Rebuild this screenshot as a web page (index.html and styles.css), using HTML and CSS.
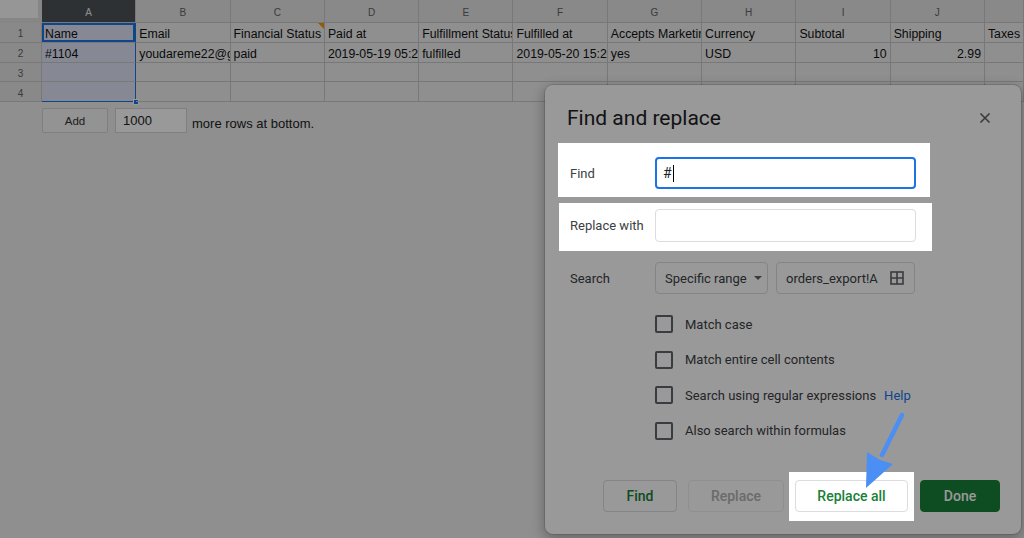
FILE: index.html
```html
<!DOCTYPE html>
<html>
<head>
<meta charset="utf-8">
<link rel="stylesheet" href="styles.css">
</head>
<body>
<div class="sheet">
  <div class="corner"></div>
  <div class="ch selh">A</div><div class="ch">B</div><div class="ch">C</div><div class="ch">D</div><div class="ch">E</div><div class="ch">F</div><div class="ch">G</div><div class="ch">H</div><div class="ch">I</div><div class="ch">J</div><div class="ch"></div>

  <div class="rh">1</div>
  <div class="c a active">Name</div><div class="c">Email</div><div class="c note">Financial Status</div><div class="c">Paid at</div><div class="c">Fulfillment Status</div><div class="c">Fulfilled at</div><div class="c">Accepts Marketing</div><div class="c">Currency</div><div class="c">Subtotal</div><div class="c">Shipping</div><div class="c">Taxes</div>

  <div class="rh">2</div>
  <div class="c a">#1104</div><div class="c">youdareme22@gmail.com</div><div class="c">paid</div><div class="c">2019-05-19 05:20:11</div><div class="c">fulfilled</div><div class="c">2019-05-20 15:20:43</div><div class="c">yes</div><div class="c">USD</div><div class="c num">10</div><div class="c num">2.99</div><div class="c"></div>

  <div class="rh">3</div>
  <div class="c a"></div><div class="c"></div><div class="c"></div><div class="c"></div><div class="c"></div><div class="c"></div><div class="c"></div><div class="c"></div><div class="c"></div><div class="c"></div><div class="c"></div>

  <div class="rh">4</div>
  <div class="c a last"></div><div class="c"></div><div class="c"></div><div class="c"></div><div class="c"></div><div class="c"></div><div class="c"></div><div class="c"></div><div class="c"></div><div class="c"></div><div class="c"></div>
</div>

<div class="addbar">
  <div class="addbtn">Add</div>
  <div class="rowsinput">1000</div>
  <span class="addtext">more rows at bottom.</span>
</div>

<div class="dialog">
  <div class="dlg-head">
    <h2 class="dlg-title">Find and replace</h2>
    <div class="close">
      <svg width="12" height="12" viewBox="0 0 12 12"><path d="M1.5 1.5 L10.5 10.5 M10.5 1.5 L1.5 10.5" stroke="#5f6368" stroke-width="1.6" fill="none"/></svg>
    </div>
  </div>

  <div class="lit find-box">
    <span class="lbl">Find</span>
    <div class="field focus">#<span class="caret"></span></div>
  </div>

  <div class="lit repl-box">
    <span class="lbl">Replace with</span>
    <div class="field tall"></div>
  </div>

  <div class="search-row">
    <span class="lbl">Search</span>
    <div class="select">Specific range<span class="tri"></span></div>
    <div class="range"><span class="range-text">orders_export!A1:A4</span>
      <svg class="gridicon" width="14" height="14" viewBox="0 0 14 14"><rect x="1" y="1" width="12" height="12" fill="none" stroke="#5f6368" stroke-width="1.6"/><path d="M7 1 V13 M1 7 H13" stroke="#5f6368" stroke-width="1.6"/></svg>
    </div>
  </div>

  <div class="checks">
    <div class="check"><span class="box"></span><span>Match case</span></div>
    <div class="check"><span class="box"></span><span>Match entire cell contents</span></div>
    <div class="check"><span class="box"></span><span>Search using regular expressions</span><span class="help">Help</span></div>
    <div class="check"><span class="box"></span><span>Also search within formulas</span></div>
  </div>

  <div class="actions">
    <div class="btn b-find">Find</div>
    <div class="btn b-replace">Replace</div>
    <div class="lit all-box"><div class="btn b-all">Replace all</div></div>
    <div class="btn b-done">Done</div>
  </div>
</div>

<div class="shade"></div>

<svg class="arrow" width="50" height="84" viewBox="0 0 50 84">
  <path d="M42 5 L22 45" stroke="#4b8ff5" stroke-width="4.5" stroke-linecap="round" fill="none"/>
  <polygon points="6,78 7,42 20,50 33,54" fill="#4b8ff5"/>
</svg>
</body>
</html>
```

FILE: styles.css
```css
html, body {
  margin: 0;
  padding: 0;
}
body {
  width: 1024px;
  height: 538px;
  overflow: hidden;
  background: #eeeeee;
  font-family: "Liberation Sans", Arial, sans-serif;
}

/* ---------- sheet ---------- */
.sheet {
  display: grid;
  grid-template-columns: 42px repeat(10, 94.3px) 1fr;
  grid-template-rows: 23px repeat(4, 19.75px);
  background: #eeeeee;
}
.sheet > div {
  box-sizing: border-box;
  border-right: 1px solid #c8c8c8;
  border-bottom: 1px solid #c8c8c8;
  overflow: hidden;
  white-space: nowrap;
  min-width: 0;
  display: flex;
  align-items: center;
}
.corner {
  background: #fafafa;
  border-right: 4px solid #e0e0e0 !important;
  border-bottom: 5px solid #e0e0e0 !important;
}
.ch {
  background: #e4e4e4;
  justify-content: center;
  font-size: 10px;
  color: #5f6368;
  padding-top: 3px;
}
.ch.selh {
  background: #4e5256;
  color: #e8eaed;
}
.rh {
  background: #e4e4e4;
  justify-content: center;
  font-size: 10px;
  color: #5f6368;
  padding-top: 3px;
}
.c {
  font-size: 12.3px;
  color: #111;
  padding: 3px 3px 0 3px;
  position: relative;
}
.c.num {
  justify-content: flex-end;
}
.c.a {
  background: #e0e5f7;
  border-right: 1px solid #1a73e8;
}
.c.a.active {
  box-shadow: inset 0 0 0 2px #1a73e8;
}
.c.a.last {
  border-bottom: 1px solid #1a73e8;
  overflow: visible;
}
.c.a.last::after {
  content: "";
  position: absolute;
  right: -4px;
  bottom: -4px;
  width: 6px;
  height: 6px;
  background: #1a73e8;
  border: 1px solid #fff;
  box-sizing: border-box;
}
.c.note::after {
  content: "";
  position: absolute;
  right: 0;
  top: 0;
  border-top: 6px solid #f29900;
  border-left: 6px solid transparent;
}

/* ---------- add rows ---------- */
.addbar {
  display: flex;
  align-items: center;
  padding: 6px 0 0 42px;
}
.addbtn {
  box-sizing: border-box;
  width: 66px;
  height: 25px;
  border: 1px solid #d4d4d4;
  border-radius: 2px;
  background: #f5f5f5;
  font-size: 11.5px;
  color: #333;
  display: flex;
  align-items: center;
  justify-content: center;
}
.rowsinput {
  box-sizing: border-box;
  width: 72px;
  height: 25px;
  margin-left: 7px;
  border: 1px solid #d4d4d4;
  background: #fff;
  font-size: 13px;
  color: #222;
  padding: 0 7px;
  display: flex;
  align-items: center;
}
.addtext {
  margin-left: 5px;
  font-size: 13px;
  color: #222;
  padding-top: 5px;
}

/* ---------- dialog ---------- */
.dialog {
  position: absolute;
  left: 545px;
  top: 85px;
  width: 476px;
  height: 449px;
  box-sizing: border-box;
  background: #fff;
  border-radius: 8px;
  box-shadow: 0 0 0 1px rgba(0,0,0,0.12), 0 4px 12px 2px rgba(0,0,0,0.25);
  display: flex;
  flex-direction: column;
  font-family: Roboto, "Liberation Sans", Arial, sans-serif;
  color: #3c4043;
}
.dlg-head {
  display: flex;
  align-items: center;
  justify-content: space-between;
  padding: 20px 30px 0 22px;
}
.dlg-title {
  margin: 0;
  font-size: 21px;
  font-weight: 400;
  line-height: 26px;
  color: #202124;
}
.close {
  width: 12px;
  height: 12px;
  display: flex;
}
.lit {
  position: relative;
  z-index: 6;
  background: #fff;
}
.find-box, .repl-box {
  display: flex;
  align-items: center;
  box-sizing: border-box;
}
.find-box {
  margin: 12px 0 0 13px;
  width: 372px;
  padding: 14px 14px 8px 12px;
}
.repl-box {
  margin: 6px 0 0 14px;
  width: 373px;
  padding: 6px 16px 9px 11px;
}
.lbl {
  width: 85px;
  flex: none;
  font-size: 13px;
  color: #3c4043;
}
.field {
  box-sizing: border-box;
  width: 261px;
  height: 32px;
  border: 1px solid #dadce0;
  border-radius: 4px;
  display: flex;
  align-items: center;
  padding: 0 7px;
  font-size: 14px;
  color: #202124;
}
.field.tall {
  height: 33px;
}
.field.focus {
  border: 2px solid #1a73e8;
  padding: 0 6px;
}
.caret {
  display: inline-block;
  width: 1px;
  height: 17px;
  background: #000;
  margin-left: 1px;
}
.search-row {
  display: flex;
  align-items: center;
  margin-top: 11px;
  padding-left: 25px;
}
.select, .range {
  box-sizing: border-box;
  height: 32px;
  border: 1px solid #dadce0;
  border-radius: 4px;
  display: flex;
  align-items: center;
  font-size: 13px;
  color: #3c4043;
}
.select {
  width: 113px;
  padding: 0 0 0 9px;
}
.tri {
  margin-left: 7px;
  border-top: 4px solid #5f6368;
  border-left: 4px solid transparent;
  border-right: 4px solid transparent;
}
.range {
  width: 139px;
  margin-left: 8px;
  padding: 0 10px 0 9px;
}
.range-text {
  width: 92px;
  overflow: hidden;
  white-space: nowrap;
}
.gridicon {
  margin-left: auto;
}
.checks {
  display: flex;
  flex-direction: column;
  gap: 17.5px;
  margin-top: 21px;
  padding-left: 110px;
}
.check {
  display: flex;
  align-items: center;
  height: 18px;
  font-size: 13px;
  color: #3c4043;
}
.box {
  box-sizing: border-box;
  width: 18px;
  height: 18px;
  border: 2px solid #5f6368;
  border-radius: 2px;
  margin-right: 12px;
}
.help {
  margin-left: 8px;
  color: #1a73e8;
}
.actions {
  margin-top: auto;
  display: flex;
  align-items: flex-start;
  justify-content: flex-end;
  padding: 0 21px 13px 0;
}
.btn {
  box-sizing: border-box;
  height: 32px;
  border: 1px solid #dadce0;
  border-radius: 4px;
  display: flex;
  align-items: center;
  justify-content: center;
  font-size: 14px;
  font-weight: 500;
  color: #188038;
  background: #fff;
  margin-top: 8px;
}
.b-find { width: 74px; }
.b-replace {
  width: 96px;
  margin-left: 11px;
  border-color: #eceef0;
  color: #b0b2b4;
}
.all-box {
  margin-left: 5px;
  padding: 8px 6px 9px 6px;
}
.b-all {
  width: 113px;
  margin-top: 0;
}
.b-done {
  width: 80px;
  margin-left: 6px;
  background: #188038;
  border-color: #188038;
  color: #fff;
}

/* ---------- dim overlay & annotation ---------- */
.shade {
  position: absolute;
  left: 0;
  top: 0;
  width: 1024px;
  height: 538px;
  background: rgba(0,0,0,0.4);
  z-index: 5;
}
.arrow {
  position: absolute;
  left: 860px;
  top: 410px;
  z-index: 7;
}
```
